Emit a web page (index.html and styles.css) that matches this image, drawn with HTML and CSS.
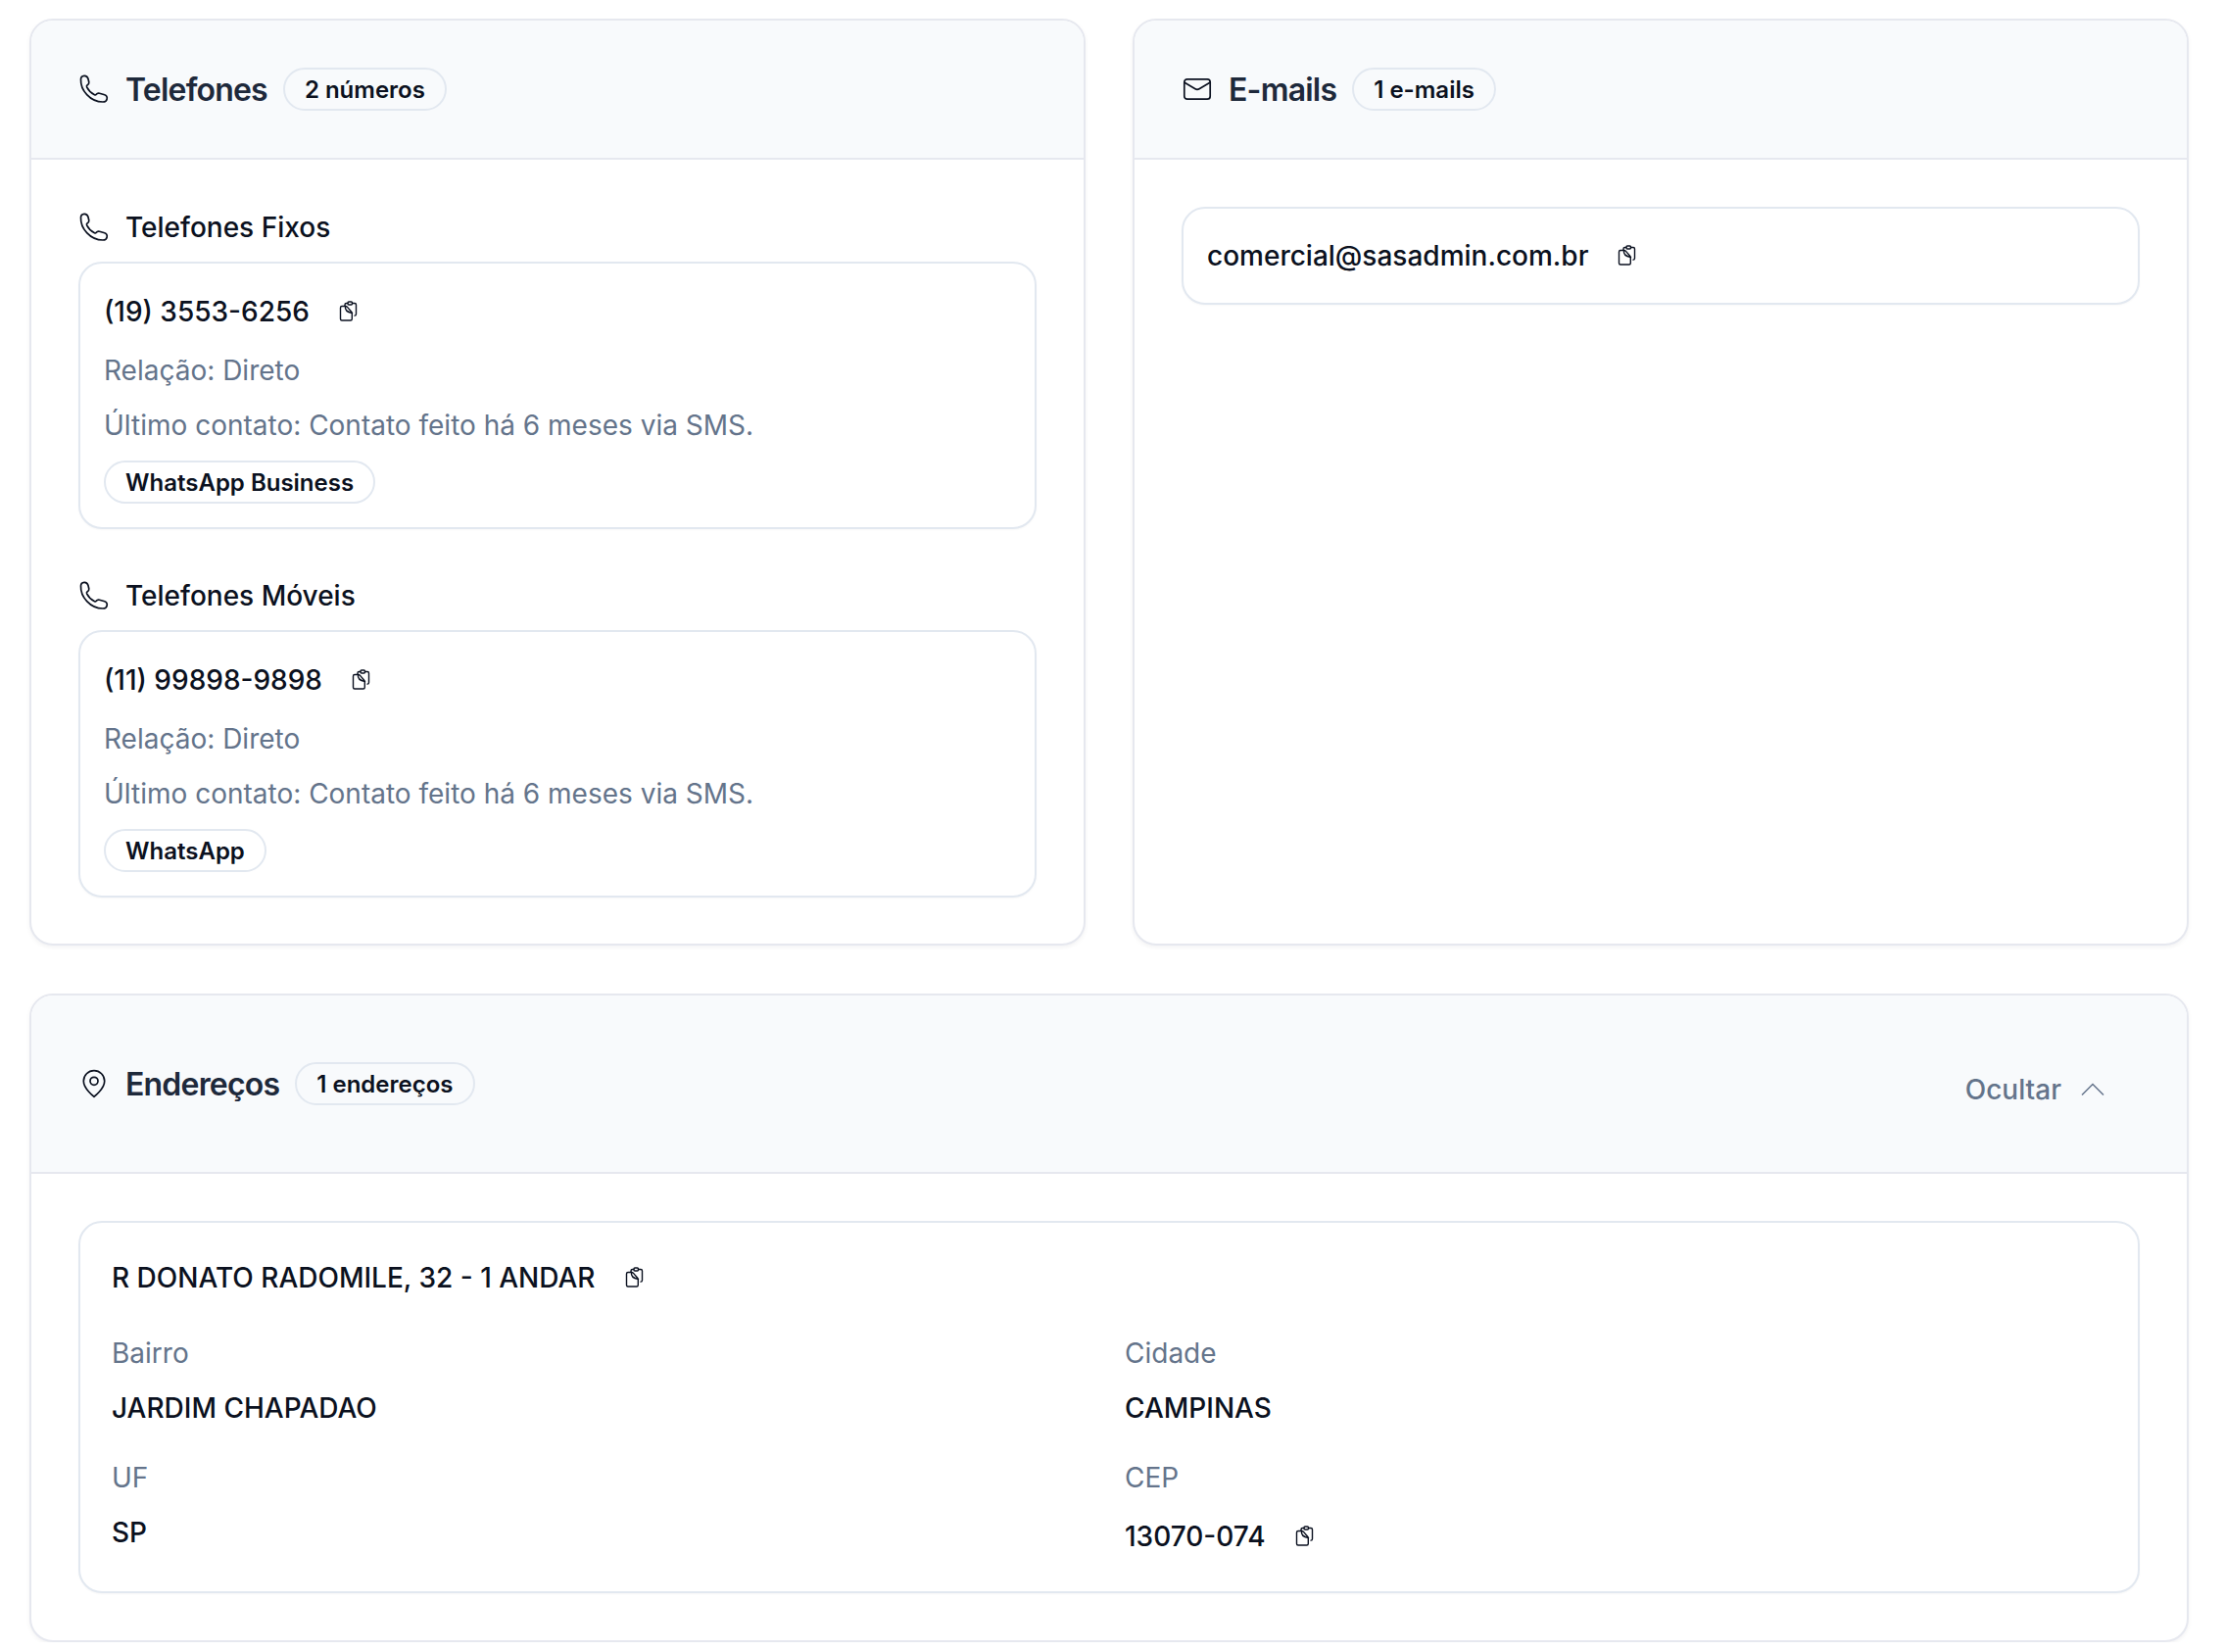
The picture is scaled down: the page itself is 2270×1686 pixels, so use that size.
FILE: index.html
```html
<!DOCTYPE html>
<html lang="pt-BR">
<head>
<meta charset="utf-8">
<title>Contatos</title>
<link rel="stylesheet" href="styles.css">
</head>
<body>
<svg class="defs" width="0" height="0" aria-hidden="true">
  <symbol id="i-phone" viewBox="5 5 32 32"><path d="M7.500 11C7.500 9 9 7.500 11 7.300 13 7.200 14.500 8.500 15 10.500L15.800 14C16 15.300 15.300 16.200 14 17 13.300 17.500 13.300 18 13.600 18.800 15.500 22.500 18 25 21.500 26.800 22.300 27.100 22.800 27 23.300 26.300 24.200 25 25.200 24.800 26.500 25.200L31 26.500C33.500 27.300 34.600 28.800 34.200 30.800 33.800 32.800 32 34 30 34 17 34 7 22 7.500 11Z"/></symbol>
  <symbol id="i-mail" viewBox="0 0 32 32"><rect x="2.800" y="5.800" width="26.400" height="20.400" rx="3"/><path d="M3.500 9.500 14 15.800c1.300.8 2.700.8 4 0L28.500 9.500"/></symbol>
  <symbol id="i-pin" viewBox="0 0 32 32"><path d="M26.700 13.300C26.700 21.300 16 29.300 16 29.300S5.300 21.300 5.300 13.300a10.700 10.700 0 0 1 21.400 0Z"/><circle cx="16" cy="13.300" r="4"/></symbol>
  <symbol id="i-copy" viewBox="5 7 22 22"><path d="M9 12.500h3.500c.8 0 1.500.3 2 .9l4 4.600c.5.6.8 1.300.8 2v5.500c0 .8-.7 1.500-1.500 1.500H9c-.8 0-1.500-.7-1.500-1.500V14c0-.8.7-1.500 1.500-1.500Z"/><path d="M12.500 12.500c-.5 3 1.500 6 7 7"/><path d="M12 12v-1c0-.8.7-1.500 1.500-1.500h1.300M19.500 9.500H22c.8 0 1.500.7 1.500 1.500v9.500c0 .8-.4 1.500-1.500 1.600"/><rect x="15" y="8" width="4.500" height="3" rx="1"/></symbol>
</svg>

<main class="page">
  <div class="top-row">
    <section class="card">
      <header class="card-head">
        <svg class="ico"><use href="#i-phone"/></svg>
        <h2 class="card-title">Telefones</h2>
        <span class="pill">2 números</span>
      </header>
      <div class="card-body card-body-phones">
        <div class="group">
          <h3 class="group-title"><svg class="ico"><use href="#i-phone"/></svg>Telefones Fixos</h3>
          <article class="item">
            <p class="value"><span>(19) 3553-6256</span><svg class="copy"><use href="#i-copy"/></svg></p>
            <p class="muted">Relação: Direto</p>
            <p class="muted">Último contato: Contato feito há 6 meses via SMS.</p>
            <span class="pill pill-white">WhatsApp Business</span>
          </article>
        </div>
        <div class="group">
          <h3 class="group-title"><svg class="ico"><use href="#i-phone"/></svg>Telefones Móveis</h3>
          <article class="item">
            <p class="value"><span>(11) 99898-9898</span><svg class="copy"><use href="#i-copy"/></svg></p>
            <p class="muted">Relação: Direto</p>
            <p class="muted">Último contato: Contato feito há 6 meses via SMS.</p>
            <span class="pill pill-white">WhatsApp</span>
          </article>
        </div>
      </div>
    </section>

    <section class="card">
      <header class="card-head">
        <svg class="ico"><use href="#i-mail"/></svg>
        <h2 class="card-title">E-mails</h2>
        <span class="pill">1 e-mails</span>
      </header>
      <div class="card-body">
        <article class="item item-email">
          <p class="value"><span>comercial@sasadmin.com.br</span><svg class="copy"><use href="#i-copy"/></svg></p>
        </article>
      </div>
    </section>
  </div>

  <section class="card">
    <header class="card-head card-head-tall">
      <svg class="ico"><use href="#i-pin"/></svg>
      <h2 class="card-title">Endereços</h2>
      <span class="pill">1 endereços</span>
      <button class="toggle" type="button">Ocultar
        <svg class="chev" viewBox="0 0 24 24"><path d="M1 17.500 12 6.500 23 17.500"/></svg>
      </button>
    </header>
    <div class="card-body">
      <article class="item item-address">
        <p class="value"><span>R DONATO RADOMILE, 32 - 1 ANDAR</span><svg class="copy"><use href="#i-copy"/></svg></p>
        <div class="fields">
          <div class="field"><p class="muted">Bairro</p><p class="field-value">JARDIM CHAPADAO</p></div>
          <div class="field"><p class="muted">Cidade</p><p class="field-value">CAMPINAS</p></div>
          <div class="field"><p class="muted">UF</p><p class="field-value">SP</p></div>
          <div class="field"><p class="muted">CEP</p><p class="field-value field-copy"><span>13070-074</span><svg class="copy"><use href="#i-copy"/></svg></p></div>
        </div>
      </article>
    </div>
  </section>
</main>
</body>
</html>
```

FILE: styles.css
```css
* { box-sizing: border-box; }
html, body { margin: 0; padding: 0; background: #fff; }
body { font-family: Inter, "Liberation Sans", sans-serif; color: #0b1120; font-size: 24px; }
p, h2, h3 { margin: 0; }
.defs { position: absolute; }

.page { padding: 19px 36px 0 30px; display: flex; flex-direction: column; gap: 49px; }
.top-row { display: grid; grid-template-columns: 1fr 1fr; gap: 48px; }

.card {
  border: 2px solid #e6e8ef;
  border-radius: 24px;
  background: #fff;
  box-shadow: 0 2px 4px rgba(15, 23, 42, .05);
  overflow: hidden;
}
.card-head {
  height: 142px;
  background: #f8fafc;
  border-bottom: 2px solid #e6e8ef;
  padding: 0 48px;
  display: flex;
  align-items: center;
}
.card-head-tall { height: 182px; }
.card-title { font-size: 32px; font-weight: 600; color: #1e293b; letter-spacing: -.8px; margin-left: 16px; margin-right: 16px; }
.ico { width: 32px; height: 32px; flex: none; fill: none; stroke: #0b1120; stroke-width: 1.700; stroke-linecap: round; stroke-linejoin: round; }
.pill {
  display: inline-flex;
  align-items: center;
  height: 44px;
  padding: 0 20px;
  border: 2px solid #e2e8f0;
  border-radius: 22px;
  font-size: 24px;
  font-weight: 600;
  color: #0b1120;
}
.pill-white { background: #fff; }

.toggle {
  margin-left: auto;
  margin-right: 36px;
  margin-top: 12px;
  background: none;
  border: 0;
  padding: 0;
  font: 500 28px Inter, sans-serif;
  color: #64748b;
  display: flex;
  align-items: center;
  gap: 20px;
}
.chev { width: 24px; height: 24px; fill: none; stroke: #64748b; stroke-width: 1.500; }

.card-body { padding: 48px; display: flex; flex-direction: column; gap: 47px; }
.card-body-phones { padding-bottom: 47px; }
.group { display: flex; flex-direction: column; gap: 15px; }
.group-title { display: flex; align-items: center; gap: 16px; height: 41px; font-size: 28px; font-weight: 500; }
.item { border: 2px solid #e2e8f0; border-radius: 24px; padding: 24px; background: #fff; box-shadow: 0 1px 2px rgba(15,23,42,.03); }
.item-email { padding: 23px 24px; }
.value { display: flex; align-items: center; gap: 29px; font-size: 28px; font-weight: 500; line-height: 50px; }
.muted { font-size: 28px; color: #64748b; line-height: 42px; }
.value + .muted { margin-top: 14px; }
.muted + .muted { margin-top: 14px; }
.copy { width: 22px; height: 22px; flex: none; fill: none; stroke: #0b1120; stroke-width: 1.400; stroke-linejoin: round; stroke-linecap: round; }
.item .pill { margin-top: 15px; }
.item-address { padding: 31px 32px 33px; }
.item-address .value { gap: 30px; }
.fields { display: grid; grid-template-columns: 1fr 1fr; gap: 31px 32px; margin-top: 31px; }
.field-value { font-size: 28px; font-weight: 500; line-height: 38px; margin-top: 16px; }
.field-copy { display: flex; align-items: center; gap: 29px; line-height: 46px; }
```
